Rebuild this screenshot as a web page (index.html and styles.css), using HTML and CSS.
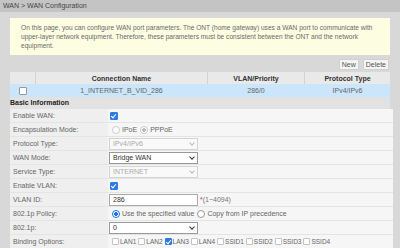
FILE: index.html
```html
<!DOCTYPE html>
<html lang="en">
  <head>
    <meta charset="UTF-8" />
    <title>WAN Configuration</title>
    <link rel="stylesheet" href="styles.css">
  </head>
  <body>
    <div class="titlebar">WAN &gt; WAN Configuration</div>
    <div class="content">
      <div class="notice">
        On this page, you can configure WAN port parameters. The ONT (home gateway) uses a WAN port to communicate with<br>
        upper-layer network equipment. Therefore, these parameters must be consistent between the ONT and the network<br>
        equipment.
      </div>
      <div class="toolbar">
        <button class="btn">New</button>
        <button class="btn">Delete</button>
      </div>
      <table class="list">
        <tr class="list-head">
          <th class="col-check"></th>
          <th class="col-name">Connection Name</th>
          <th class="col-vlan">VLAN/Priority</th>
          <th>Protocol Type</th>
        </tr>
        <tr class="list-row">
          <td class="col-check"><span class="cb"></span></td>
          <td>1_INTERNET_B_VID_286</td>
          <td>286/0</td>
          <td>IPv4/IPv6</td>
        </tr>
      </table>
      <div class="section">Basic Information</div>
      <div class="form">
        <div class="row">
          <div class="label">Enable WAN:</div>
          <div class="value"><span class="cb checked"></span></div>
        </div>
        <div class="row">
          <div class="label">Encapsulation Mode:</div>
          <div class="value">
            <span class="opt"><span class="radio off"></span>IPoE</span>
            <span class="opt"><span class="radio off dot"></span>PPPoE</span>
          </div>
        </div>
        <div class="row">
          <div class="label">Protocol Type:</div>
          <div class="value"><div class="select disabled">IPv4/IPv6<span class="chev"></span></div></div>
        </div>
        <div class="row">
          <div class="label">WAN Mode:</div>
          <div class="value"><div class="select">Bridge WAN<span class="chev"></span></div></div>
        </div>
        <div class="row">
          <div class="label">Service Type:</div>
          <div class="value"><div class="select disabled">INTERNET<span class="chev"></span></div></div>
        </div>
        <div class="row">
          <div class="label">Enable VLAN:</div>
          <div class="value"><span class="cb checked"></span></div>
        </div>
        <div class="row">
          <div class="label">VLAN ID:</div>
          <div class="value">
            <div class="input">286</div>
            <span class="req">*</span><span class="hint">(1~4094)</span>
          </div>
        </div>
        <div class="row">
          <div class="label">802.1p Policy:</div>
          <div class="value">
            <span class="opt"><span class="radio on"></span>Use the specified value</span>
            <span class="opt"><span class="radio"></span>Copy from IP precedence</span>
          </div>
        </div>
        <div class="row">
          <div class="label">802.1p:</div>
          <div class="value"><div class="select">0<span class="chev"></span></div></div>
        </div>
        <div class="row">
          <div class="label">Binding Options:</div>
          <div class="value binds">
            <span class="opt"><span class="cb"></span>LAN1</span>
            <span class="opt"><span class="cb"></span>LAN2</span>
            <span class="opt"><span class="cb checked"></span>LAN3</span>
            <span class="opt"><span class="cb"></span>LAN4</span>
            <span class="opt"><span class="cb"></span>SSID1</span>
            <span class="opt"><span class="cb"></span>SSID2</span>
            <span class="opt"><span class="cb"></span>SSID3</span>
            <span class="opt"><span class="cb"></span>SSID4</span>
          </div>
        </div>
      </div>
    </div>
  </body>
</html>
```

FILE: styles.css
```css
html,
body {
  margin: 0;
  height: 100%;
}
body {
  background-color: #d8d8d8;
  font-family: "Liberation Sans", Arial, sans-serif;
  font-size: 7px;
  color: #555;
  overflow: hidden;
}

.titlebar {
  height: 12px;
  line-height: 12px;
  padding-left: 3px;
  background-color: #c4c4c4;
  color: #444;
}

.content {
  padding: 6px 7px 0 10px;
}

.notice {
  margin-right: 3px;
  padding: 5px 2px 5px 11px;
  height: 27px;
  line-height: 9px;
  font-size: 6.6px;
  white-space: nowrap;
  overflow: hidden;
  background-color: #fdfde2;
  color: #6a6a6a;
}

.toolbar {
  display: flex;
  justify-content: flex-end;
  gap: 4px;
  margin: 4px 4px 2px 0;
}
.btn {
  height: 11px;
  padding: 0 2px;
  font-family: inherit;
  font-size: 7px;
  line-height: 9px;
  color: #555;
  background-color: #f4f4f4;
  border: 1px solid #d0d0d0;
  border-radius: 1px;
}

.list {
  width: 380px;
  border-collapse: collapse;
  text-align: center;
}
.list th,
.list td {
  height: 12px;
  padding: 0;
  border-left: 1px solid #d3d3d3;
}
.list th:first-child,
.list td:first-child {
  border-left: none;
}
.list-head th {
  background-color: #e9e9e9;
  color: #333;
  font-weight: bold;
}
.list-row td {
  height: 13px;
  background-color: #cbe6fa;
  color: #666;
  border-left-color: #cbe6fa;
}
.col-check {
  width: 25px;
}
.col-name {
  width: 171px;
}
.col-vlan {
  width: 96px;
}

.section {
  height: 12px;
  line-height: 12px;
  margin-right: 3px;
  background-color: #e2e2e2;
  color: #222;
  font-weight: bold;
}

.form {
  background-color: #f6f6f6;
}
.row {
  display: grid;
  grid-template-columns: 98px 1fr;
  height: 14px;
  border-bottom: 1px solid #e4e4e4;
  box-sizing: border-box;
}
.label {
  display: flex;
  align-items: center;
  padding-left: 3px;
  background-color: #efefef;
  color: #666;
}
.value {
  display: flex;
  align-items: center;
  padding-left: 1px;
  color: #666;
}

.opt {
  display: inline-flex;
  align-items: center;
  gap: 2px;
  margin-right: 3px;
}
.value .opt:first-child {
  margin-left: 3px;
}
.binds {
  font-size: 6.5px;
}
.binds .opt {
  gap: 1px;
  margin-right: 2px;
}

.cb {
  display: inline-block;
  width: 6px;
  height: 6px;
  border: 1px solid #b8b8b8;
  border-radius: 1px;
  background-color: #fff;
  position: relative;
}
.binds .cb {
  width: 5px;
  height: 5px;
  border-color: #c4c4c4;
}
.list .cb {
  vertical-align: middle;
  border-color: #999;
}
.value > .cb {
  margin-left: 1px;
}
.cb.checked,
.binds .cb.checked {
  background-color: #2c7be5;
  border-color: #2c7be5;
}
.cb.checked:after {
  content: '';
  position: absolute;
  left: 1px;
  top: 0;
  width: 2px;
  height: 4px;
  border: solid #fff;
  border-width: 0 1px 1px 0;
  transform: rotate(40deg);
}

.radio {
  display: inline-block;
  width: 6px;
  height: 6px;
  border: 1px solid #999;
  border-radius: 50%;
  background-color: #fff;
  box-sizing: content-box;
}
.radio.off {
  border-color: #ccc;
}
.radio.dot {
  background: radial-gradient(circle, #bbb 0 2px, #fff 2px);
}
.radio.on {
  border-color: #1b73e8;
  background: radial-gradient(circle, #1b73e8 0 2px, #fff 2px);
}

.select,
.input {
  position: relative;
  width: 84px;
  height: 10px;
  line-height: 10px;
  padding-left: 3px;
  border: 1px solid #999;
  background-color: #fff;
  color: #333;
}
.select.disabled {
  border-color: #d4d4d4;
  background-color: #f9f9f9;
  color: #aaa;
}
.chev {
  position: absolute;
  right: 3px;
  top: 2px;
  width: 3px;
  height: 3px;
  border: solid #333;
  border-width: 0 1px 1px 0;
  transform: rotate(45deg);
}
.select.disabled .chev {
  border-color: #bbb;
}
.input {
  border-color: #aaa;
}
.req {
  margin-left: 2px;
  color: #e03030;
}
.hint {
  color: #777;
}
```
